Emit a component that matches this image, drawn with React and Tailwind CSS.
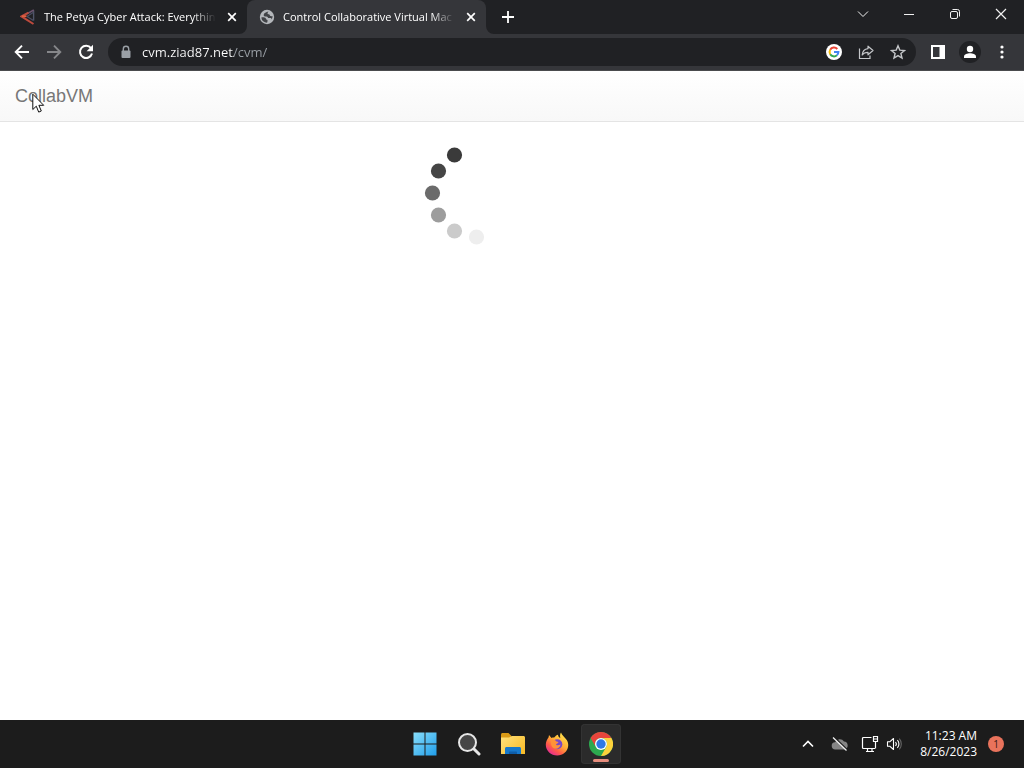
import React from "react";

const ui = "font-['Open_Sans','Noto_Sans',sans-serif]";

function CloseGlyph() {
  return (
    <svg width="10" height="10" viewBox="0 0 10 10" fill="none" stroke="#fff" strokeWidth="1.7" aria-hidden="true">
      <path d="M1.2 1.2 8.8 8.8M8.8 1.2 1.2 8.8" />
    </svg>
  );
}

function Tab({ icon, title, active }) {
  return (
    <div
      role="tab"
      aria-selected={active}
      className={
        "relative flex h-full w-[239px] min-w-0 items-center gap-2 rounded-t-lg pl-3 pr-[7px] " +
        (active ? "bg-[#35363a]" : "bg-transparent")
      }
    >
      {active && (
        <>
          <svg className="absolute bottom-0 -left-2" width="8" height="8" viewBox="0 0 8 8" aria-hidden="true">
            <path d="M8 0v8H0a8 8 0 0 0 8-8Z" fill="#35363a" />
          </svg>
          <svg className="absolute bottom-0 -right-2" width="8" height="8" viewBox="0 0 8 8" aria-hidden="true">
            <path d="M0 0v8h8a8 8 0 0 1-8-8Z" fill="#35363a" />
          </svg>
        </>
      )}
      <span className="shrink-0">{icon}</span>
      <span className="min-w-0 flex-1 whitespace-nowrap text-[11px] font-medium leading-4 text-white [mask-image:linear-gradient(to_right,#000_calc(100%-24px),transparent)]">
        {title}
      </span>
      <button aria-label="Close tab" className="flex size-4 shrink-0 items-center justify-center">
        <CloseGlyph />
      </button>
    </div>
  );
}

function PetyaIcon() {
  return (
    <svg width="16" height="16" viewBox="0 0 16 16" fill="none" aria-hidden="true">
      <path d="M13.600 1.500v10" stroke="#50566a" strokeWidth="1.400" />
      <path d="M13.800 1 6 5.400" stroke="#6d5570" strokeWidth="1.500" />
      <path d="m7 7.500 6.500-4.300M7 7.500l6.500 4" stroke="#4a4e63" strokeWidth="1.200" />
      <path d="M8.500 3.600 1.500 7.400l12 7.600" stroke="#bd4a3d" strokeWidth="2" />
      <path d="M2 7.200h4.500" stroke="#e0603f" strokeWidth="1.800" />
    </svg>
  );
}

function GlobeIcon() {
  return (
    <svg width="16" height="16" viewBox="0 0 16 16" aria-hidden="true">
      <circle cx="8" cy="8" r="7.200" fill="#b4b7bb" />
      <path
        d="M9.500 2.500C7 3 5 4 4.700 5.700c-.2 1.500 1 1.800 2.500 1.800 1.500.1 1.700.7 1.800 1.600h2c1 0 1.500.4 1.600 1.300A5.700 5.700 0 0 0 13.600 7c-1 .5-2.600.4-2.900-.9-.2-1-1.200-.7-1.900-1.100-.6-.5-.2-1.500.7-2.500Z"
        fill="#414347"
      />
      <path d="M2.300 8.500c1.500-.3 3.600-.2 4.400.8.500.7.300 1.200 1.200 1.500 1 .3.800 1.300.2 2.900A5.700 5.700 0 0 1 2.300 8.500Z" fill="#414347" />
    </svg>
  );
}

function WindowButton({ label, children }) {
  return (
    <button aria-label={label} className="flex h-7 w-[46px] items-center justify-center">
      <svg width="12" height="12" viewBox="0 0 12 12" fill="none" stroke="#f1f1f1" strokeWidth="1" aria-hidden="true">
        {children}
      </svg>
    </button>
  );
}

function TabStrip() {
  return (
    <header className="flex h-[34px] shrink-0 items-start bg-[#202124] pl-2">
      <div role="tablist" className="flex h-full min-w-0">
        <Tab icon={<PetyaIcon />} title="The Petya Cyber Attack: Everythin" active={false} />
        <Tab icon={<GlobeIcon />} title="Control Collaborative Virtual Mac" active />
      </div>
      <button aria-label="New tab" className="ml-2 flex h-full w-7 items-center justify-center">
        <svg width="12" height="12" viewBox="0 0 12 12" stroke="#fff" strokeWidth="1.8" aria-hidden="true">
          <path d="M6 0v12M0 6h12" />
        </svg>
      </button>
      <div className="ml-auto flex">
        <WindowButton label="Search tabs">
          <path d="m1 3.500 5 5 5-5" />
        </WindowButton>
        <WindowButton label="Minimize">
          <path d="M1 6.500h10" />
        </WindowButton>
        <WindowButton label="Restore">
          <rect x="1.500" y="3.500" width="7" height="7" rx="1.500" />
          <path d="M3.500 1.500h5a2 2 0 0 1 2 2v5" />
        </WindowButton>
        <WindowButton label="Close">
          <path d="m1 1 10 10M11 1 1 11" strokeWidth="1.200" />
        </WindowButton>
      </div>
    </header>
  );
}

function ToolButton({ label, children }) {
  return (
    <button aria-label={label} className="flex size-8 shrink-0 items-center justify-center">
      {children}
    </button>
  );
}

function GoogleIcon() {
  return (
    <svg width="16" height="16" viewBox="0 0 16 16" aria-hidden="true">
      <circle cx="8" cy="8" r="8" fill="#fff" />
      <g fill="none" strokeWidth="2">
        <path d="M4.200 5.800A4.400 4.400 0 0 1 11.300 5" stroke="#ea4335" />
        <path d="M4.200 10.200a4.400 4.400 0 0 1 0-4.400" stroke="#fbbc05" />
        <path d="M10.900 11.300a4.400 4.400 0 0 1-6.700-1.100" stroke="#34a853" />
        <path d="M8 8.100h4.400c0 1.400-.6 2.500-1.500 3.200" stroke="#4285f4" />
      </g>
    </svg>
  );
}

function Toolbar() {
  return (
    <div className="flex h-[37px] shrink-0 items-center gap-1.5 border-b border-[#4a4b4e] bg-[#35363a] px-1.5">
      <nav aria-label="History" className="flex">
        <ToolButton label="Back">
          <svg width="16" height="16" viewBox="0 0 16 16" fill="none" stroke="#fff" strokeWidth="1.900" aria-hidden="true">
            <path d="M15 8H2.500M8 1.700 1.700 8 8 14.300" />
          </svg>
        </ToolButton>
        <ToolButton label="Forward">
          <svg width="16" height="16" viewBox="0 0 16 16" fill="none" stroke="#86878a" strokeWidth="1.900" aria-hidden="true">
            <path d="M1 8h12.500M8 1.700 14.300 8 8 14.300" />
          </svg>
        </ToolButton>
        <ToolButton label="Reload">
          <svg width="16" height="16" viewBox="0 0 16 16" fill="none" aria-hidden="true">
            <path d="M13 4.200A6.100 6.100 0 1 0 14 9.500" stroke="#fff" strokeWidth="2" />
            <path d="M15 .8v6.400H8.600Z" fill="#fff" />
          </svg>
        </ToolButton>
      </nav>
      <div className="flex h-7 min-w-0 flex-1 items-center rounded-full bg-[#202124] pl-3 pr-0.5">
        <svg className="shrink-0" width="12" height="14" viewBox="0 0 12 14" aria-hidden="true">
          <path d="M3.300 6V4a2.700 2.700 0 0 1 5.400 0v2" fill="none" stroke="#9aa0a6" strokeWidth="1.400" />
          <rect x="1.500" y="5.500" width="9" height="7.500" rx="1" fill="#9aa0a6" />
        </svg>
        <input
          aria-label="Address"
          defaultValue="cvm.ziad87.net/cvm/"
          className="ml-2.5 h-6 min-w-0 flex-1 bg-[linear-gradient(to_right,#fff_92px,#9aa0a6_92px)] bg-clip-text text-[13px] font-medium leading-6 text-transparent outline-none"
        />
        <div className="flex h-7 items-center">
          <ToolButton label="Search with Google">
            <GoogleIcon />
          </ToolButton>
          <ToolButton label="Share">
            <svg width="16" height="16" viewBox="0 0 16 16" fill="none" stroke="#c4c6c9" strokeWidth="1.200" aria-hidden="true">
              <path d="M1.500 4.500v10h10.500v-3" />
              <path d="M10 2.200 15 6.500l-5 4.300V8.300C7.300 8.300 5.500 9 4.200 11 4.500 7.500 6.500 5 10 4.600Z" strokeLinejoin="round" />
            </svg>
          </ToolButton>
          <ToolButton label="Bookmark this page">
            <svg width="16" height="16" viewBox="0 0 16 16" fill="none" stroke="#c4c6c9" strokeWidth="1.400" aria-hidden="true">
              <path d="m8 1.800 1.800 4.300 4.700.4-3.600 3 1.100 4.600L8 11.600l-4 2.500 1.100-4.600-3.600-3 4.700-.4Z" />
            </svg>
          </ToolButton>
        </div>
      </div>
      <div className="flex">
        <ToolButton label="Side panel">
          <svg width="14" height="14" viewBox="0 0 14 14" aria-hidden="true">
            <path d="M0 0h14v14H0ZM2 2v10h6.500V2Z" fill="#fff" fillRule="evenodd" />
          </svg>
        </ToolButton>
        <ToolButton label="Profile">
          <svg width="22" height="22" viewBox="0 0 22 22" aria-hidden="true">
            <circle cx="11" cy="11" r="11" fill="#202124" />
            <circle cx="11" cy="8" r="3.200" fill="#fff" />
            <path d="M5 17v-1.500c0-2.200 3.500-3.300 6-3.300s6 1.100 6 3.300V17Z" fill="#fff" />
          </svg>
        </ToolButton>
        <ToolButton label="Menu">
          <svg width="4" height="14" viewBox="0 0 4 14" fill="#fff" aria-hidden="true">
            <circle cx="2" cy="2" r="1.600" />
            <circle cx="2" cy="7" r="1.600" />
            <circle cx="2" cy="12" r="1.600" />
          </svg>
        </ToolButton>
      </div>
    </div>
  );
}

const dots = [
  [30, 14, "#3a3a3a"],
  [14, 30, "#454545"],
  [8, 52, "#6b6b6b"],
  [14, 74, "#9d9d9d"],
  [30, 90, "#cbcbcb"],
  [52, 96, "#eeeeee"],
];

function Spinner() {
  return (
    <svg role="img" aria-label="Loading" width="104" height="104" viewBox="0 0 104 104">
      {dots.map(([x, y, c]) => (
        <circle key={y} cx={x + 0.5} cy={y} r="7.600" fill={c} />
      ))}
    </svg>
  );
}

function Page() {
  return (
    <main className="flex-1 bg-white">
      <div className="flex h-[51px] items-center border-b border-[#e4e4e4] bg-linear-to-b from-white to-[#f8f8f8] px-[15px]">
        <a href="#home" className="font-['Liberation_Sans',Arial,sans-serif] text-[18px] leading-5 text-[#777]">
          CollabVM
        </a>
      </div>
      <div className="flex justify-center pr-[72px] pt-[19px]">
        <Spinner />
      </div>
    </main>
  );
}

function TaskButton({ label, active, children }) {
  return (
    <button
      aria-label={label}
      className={
        "relative flex size-10 items-center justify-center rounded " +
        (active ? "bg-[#2b2b2b] ring-1 ring-inset ring-[#333]" : "")
      }
    >
      {children}
      {active && <span className="absolute bottom-0.5 h-[3px] w-4 rounded-full bg-[#e88d7d]" />}
    </button>
  );
}

function Taskbar() {
  return (
    <footer className="grid h-12 shrink-0 grid-cols-[1fr_auto_1fr] items-center bg-[#1c1c1c]">
      <div />
      <div className="flex items-center gap-1 pl-0.5">
        <TaskButton label="Start">
          <svg width="24" height="24" viewBox="0 0 24 24" aria-hidden="true">
            <defs>
              <linearGradient id="win" x1="0" y1="0" x2="24" y2="24" gradientUnits="userSpaceOnUse">
                <stop stopColor="#8be0fb" />
                <stop offset="1" stopColor="#1d9cea" />
              </linearGradient>
            </defs>
            <path d="M.5.500h11v11H.5ZM12.500.5h11v11h-11ZM.5 12.500h11v11H.5ZM12.500 12.500h11v11h-11Z" fill="url(#win)" />
          </svg>
        </TaskButton>
        <TaskButton label="Search">
          <svg width="24" height="24" viewBox="0 0 24 24" aria-hidden="true">
            <path d="m17 17 5 5" stroke="#e6e6e6" strokeWidth="3" strokeLinecap="round" />
            <circle cx="10.500" cy="10.500" r="8.500" fill="#464646" stroke="#e6e6e6" strokeWidth="2" />
          </svg>
        </TaskButton>
        <TaskButton label="File Explorer">
          <svg width="26" height="24" viewBox="0 0 26 24" aria-hidden="true">
            <defs>
              <linearGradient id="folder" x1="0" y1="4" x2="20" y2="23" gradientUnits="userSpaceOnUse">
                <stop stopColor="#ffe380" />
                <stop offset="1" stopColor="#f8bd2c" />
              </linearGradient>
            </defs>
            <path d="M1 2.500C1 1.700 1.700 1 2.500 1h6l3 3v5H1Z" fill="#d99a16" />
            <path d="M1 5.500h8L12 4h11.500c.9 0 1.500.6 1.500 1.500V22H1Z" fill="url(#folder)" />
            <path d="M5 22v-5.500C5 15.700 5.700 15 6.500 15h13c.8 0 1.500.7 1.500 1.500V22Z" fill="#1678cb" />
            <path d="M9 22v-1.500c0-.6.400-1 1-1h6c.6 0 1 .4 1 1V22Z" fill="#0e5da8" />
          </svg>
        </TaskButton>
        <TaskButton label="Firefox">
          <svg width="24" height="24" viewBox="0 0 24 24" aria-hidden="true">
            <defs>
              <linearGradient id="fox" x1="19" y1="2" x2="5" y2="21" gradientUnits="userSpaceOnUse">
                <stop stopColor="#ffe24a" />
                <stop offset=".45" stopColor="#ffab35" />
                <stop offset=".75" stopColor="#ff5a48" />
                <stop offset="1" stopColor="#e8308c" />
              </linearGradient>
            </defs>
            <path d="M3.600 5.200 4 3l2.500 3C7.500 5.500 8.500 5.500 9.200 5.600 10.500 3.800 12 2.800 13 2.700c0 1.500 1 2.600 2.300 3.400C15 4.200 14.800 2.300 16 .5c.8 2.600 3.100 4.200 4.700 6.200 1.800 2 2.800 4.500 2.500 7.300C22.600 19.500 18 23.500 12.200 23.500 6 23.500.8 19 .8 12.800c0-2.800 1.200-5.600 2.800-7.600Z" fill="url(#fox)" />
            <circle cx="12.300" cy="12.300" r="5" fill="#7648c8" />
            <path d="M6.500 7.500c2.500-.3 4 .6 5 2l2 .5c-.5 1.500-2.200 1.500-2.500 2.700 1.600 1.200 3.200.3 4.500-.2-.3 2.700-2.500 4.300-4.800 4.200-3.500-.3-5.700-3.500-4.200-9.200Z" fill="#ff9238" />
          </svg>
        </TaskButton>
        <TaskButton label="Google Chrome" active>
          <svg width="24" height="24" viewBox="0 0 24 24" aria-hidden="true">
            <circle cx="12" cy="12" r="12" fill="#2da94f" />
            <path d="M1.600 6A12 12 0 0 1 22.400 6H12a6 6 0 0 0-5.200 9Z" fill="#e8453c" />
            <path d="M22.400 6A12 12 0 0 1 12 24l5.200-9A6 6 0 0 0 12 6Z" fill="#fdd23b" />
            <circle cx="12" cy="12" r="6" fill="#fff" />
            <circle cx="12" cy="12" r="4.700" fill="#2f78e6" />
          </svg>
        </TaskButton>
      </div>
      <div className="flex items-center justify-end pr-5">
        <button aria-label="Show hidden icons" className="flex size-8 items-center justify-center">
          <svg width="12" height="8" viewBox="0 0 12 8" fill="none" stroke="#fff" strokeWidth="1.600" aria-hidden="true">
            <path d="m1 6.500 5-5 5 5" />
          </svg>
        </button>
        <button aria-label="OneDrive" className="flex size-8 items-center justify-center">
          <svg width="18" height="16" viewBox="0 0 18 16" aria-hidden="true">
            <path d="M4.500 13.500a3.600 3.600 0 0 1-.4-7.200A5 5 0 0 1 13 5.600a4 4 0 0 1 .5 7.900Z" fill="#858585" />
            <path d="M3.500 1.500 16.500 14" stroke="#1c1c1c" strokeWidth="1.600" />
            <path d="M2 1.500 15.500 14.500" stroke="#eee" strokeWidth="1.300" />
          </svg>
        </button>
        <button aria-label="Network" className="flex h-8 w-7 items-center justify-center">
          <svg width="18" height="18" viewBox="0 0 18 18" fill="none" stroke="#fff" strokeWidth="1.200" aria-hidden="true">
            <path d="M10.500 2.500h-8a1 1 0 0 0-1 1v9a1 1 0 0 0 1 1H14M5 16.500h8M6.500 13.500v3M11 13.500v3" />
            <path d="M12.500 1.500h4v5h-4ZM12.500 4h4M14.500 6.500v7" />
          </svg>
        </button>
        <button aria-label="Volume" className="flex h-8 w-5 items-center justify-center">
          <svg width="16" height="16" viewBox="0 0 16 16" fill="none" stroke="#fff" strokeWidth="1.100" aria-hidden="true">
            <path d="M1.500 5.800h2.200L7.500 2.500v11L3.700 10.200H1.500Z" strokeLinejoin="round" />
            <path d="M9.500 6a3 3 0 0 1 0 4M11.400 4.200a5.500 5.500 0 0 1 0 7.600" />
            <path d="M13.300 2.700a8 8 0 0 1 0 10.600" stroke="#666" />
          </svg>
        </button>
        <button className="ml-4 text-right text-[12px] leading-4 text-white">
          <span className="block">11:23 AM</span>
          <span className="block">8/26/2023</span>
        </button>
        <span className="ml-[11px] flex size-4 items-center justify-center rounded-full bg-[#e9735c] text-[10px] leading-4 text-[#3b1a14]">
          1
        </span>
      </div>
    </footer>
  );
}

export default function App() {
  return (
    <div className={"relative flex min-h-screen flex-col bg-white " + ui}>
      <TabStrip />
      <Toolbar />
      <Page />
      <Taskbar />
      <svg className="pointer-events-none absolute left-8 top-[93px]" width="13" height="21" viewBox="0 0 13 21" aria-hidden="true">
        <path d="M.8 1.200v15.300l3.500-3.300 2.400 5.900 2.600-1.100-2.400-5.700h4.800Z" fill="#fff" stroke="#111" strokeWidth="1" />
      </svg>
    </div>
  );
}
